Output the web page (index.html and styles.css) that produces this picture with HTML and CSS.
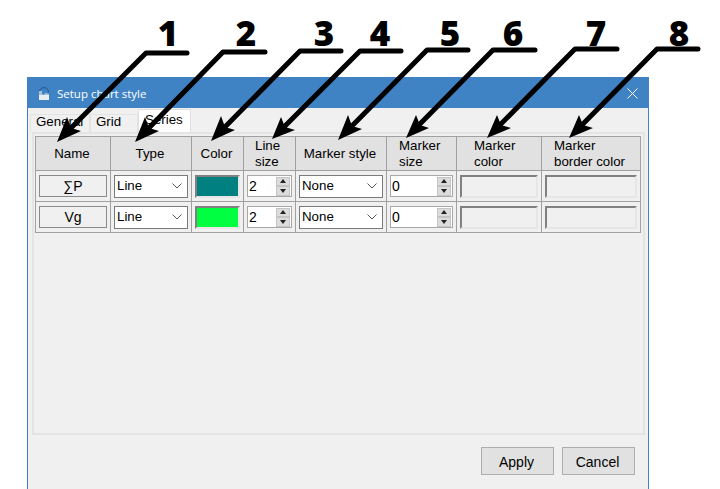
FILE: index.html
```html
<!DOCTYPE html>
<html>
<head>
<title>Setup chart style</title>
<link rel="stylesheet" href="styles.css">
</head>
<body>

<div class="window">
    <div class="titlebar">
        <svg class="app-icon" width="12" height="14" viewBox="0 0 12 14">
            <path d="M1.5 6C1 1 10 -0.5 10.5 6" fill="none" stroke="#1f4f80" stroke-width="1"/>
            <path d="M1 5h3v3l2 1 1-2 4 1v6H1z" fill="#e6edf3"/>
            <path d="M1 5h3v3l2 1 1-2 4 1v1H1z" fill="#2a6fb0" opacity=".35"/>
        </svg>
        <span class="title">Setup chart style</span>
        <svg class="close" width="11" height="11" viewBox="0 0 11 11">
            <path d="M.5.5l10 10M10.5.5l-10 10" stroke="#fff" stroke-width="1" fill="none"/>
        </svg>
    </div>

    <div class="tabs">
        <div class="tab tab-general">General</div>
        <div class="tab tab-grid">Grid</div>
        <div class="tab tab-series">Series</div>
    </div>

    <div class="panel">
        <table class="series-table">
            <tr class="head">
                <th class="w-name center">Name</th>
                <th class="w-type center">Type</th>
                <th class="w-color center">Color</th>
                <th class="w-line">Line<br>size</th>
                <th class="w-mstyle center">Marker style</th>
                <th class="w-msize">Marker<br>size</th>
                <th class="w-mcolor">Marker<br>color</th>
                <th class="w-mborder">Marker<br>border color</th>
            </tr>
            <tr>
                <td><div class="name-btn">∑P</div></td>
                <td><div class="select"><span>Line</span><svg class="chev" width="10" height="6" viewBox="0 0 10 6"><path d="M.5.5L5 5 9.5.5" fill="none" stroke="#555"/></svg></div></td>
                <td><div class="swatch teal"></div></td>
                <td>
                    <div class="spin"><span>2</span><div class="arrows"><div class="up"></div><div class="down"></div></div></div>
                </td>
                <td><div class="select"><span>None</span><svg class="chev" width="10" height="6" viewBox="0 0 10 6"><path d="M.5.5L5 5 9.5.5" fill="none" stroke="#555"/></svg></div></td>
                <td>
                    <div class="spin"><span>0</span><div class="arrows"><div class="up"></div><div class="down"></div></div></div>
                </td>
                <td><div class="swatch off"></div></td>
                <td><div class="swatch off"></div></td>
            </tr>
            <tr>
                <td><div class="name-btn">Vg</div></td>
                <td><div class="select"><span>Line</span><svg class="chev" width="10" height="6" viewBox="0 0 10 6"><path d="M.5.5L5 5 9.5.5" fill="none" stroke="#555"/></svg></div></td>
                <td><div class="swatch green"></div></td>
                <td>
                    <div class="spin"><span>2</span><div class="arrows"><div class="up"></div><div class="down"></div></div></div>
                </td>
                <td><div class="select"><span>None</span><svg class="chev" width="10" height="6" viewBox="0 0 10 6"><path d="M.5.5L5 5 9.5.5" fill="none" stroke="#555"/></svg></div></td>
                <td>
                    <div class="spin"><span>0</span><div class="arrows"><div class="up"></div><div class="down"></div></div></div>
                </td>
                <td><div class="swatch off"></div></td>
                <td><div class="swatch off"></div></td>
            </tr>
        </table>
    </div>

    <div class="footer">
        <button class="btn">Apply</button>
        <button class="btn">Cancel</button>
    </div>
</div>

<!-- callouts drawn over the screenshot -->
<svg class="callouts" width="720" height="489" viewBox="0 0 720 489">
    <g class="lines">
        <path d="M187 53H146L65 134"/>
        <path d="M265 52H223L143 134"/>
        <path d="M341 51H300L219 133"/>
        <path d="M401 51H360L280 131"/>
        <path d="M468 50H427L346 132"/>
        <path d="M535 50H493L414 130"/>
        <path d="M617 49H575L495 130"/>
        <path d="M698 49H657L577 130"/>
    </g>
    <g class="heads">
        <path d="M57 142L67 117L71 128L81 131z"/>
        <path d="M135 142L145 117L149 128L159 131z"/>
        <path d="M211 141L221 116L225 127L235 130z"/>
        <path d="M272 139L281 117L285 127L295 130z"/>
        <path d="M338 140L348 115L352 126L362 129z"/>
        <path d="M406 138L416 115L420 125L429 128z"/>
        <path d="M487 138L497 115L501 125L511 128z"/>
        <path d="M569 138L579 115L583 125L593 128z"/>
    </g>
</svg>
<span class="num n1">1</span>
<span class="num n2">2</span>
<span class="num n3">3</span>
<span class="num n4">4</span>
<span class="num n5">5</span>
<span class="num n6">6</span>
<span class="num n7">7</span>
<span class="num n8">8</span>

</body>
</html>
```

FILE: styles.css
```css
html, body {
    margin: 0;
    padding: 0;
    height: 489px;
    overflow: hidden;
    background-color: #fff;
}
body {
    position: relative;
    font-family: "Liberation Sans", Arial, sans-serif;
    font-size: 13.3px;
    color: #000;
}
.window {
    box-sizing: border-box;
    width: 622px;
    height: 412px;
    margin: 77px 0 0 27px;
    border: 1px solid #3f83c5;
    border-bottom: none;
    background-color: #f0f0f0;
}
.titlebar {
    display: flex;
    align-items: center;
    height: 30px;
    padding: 0 10px;
    background-color: #3f83c5;
    color: #fff;
    font-family: "Open Sans", sans-serif;
    font-size: 11.5px;
}
.app-icon {
    margin-right: 7px;
}
.title {
    flex: 1;
}
.tabs {
    display: flex;
    align-items: flex-end;
    height: 24px;
    padding-left: 2px;
}
.tab {
    box-sizing: border-box;
    height: 18px;
    line-height: 13px;
    border: 1px solid #e3e3e3;
    border-bottom: none;
}
.tab-general {
    width: 60px;
    padding-left: 5px;
}
.tab-grid {
    width: 48px;
    padding-left: 5px;
}
.tab-series {
    width: 53px;
    height: 23px;
    padding: 3px 0 0 6px;
    background-color: #fff;
    border-color: #e0e0e0;
}
.panel {
    box-sizing: border-box;
    width: 613px;
    height: 303px;
    margin-left: 4px;
    padding: 2px 0 0 1px;
    border: 2px solid #e4e4e4;
}
.series-table {
    width: 605px;
    border-collapse: collapse;
    table-layout: fixed;
}
.series-table th,
.series-table td {
    box-sizing: border-box;
    border: 1px solid #a0a0a0;
    padding: 0;
}
.series-table th {
    height: 33px;
    background-color: #e1e1e1;
    font-weight: normal;
    line-height: 16px;
    text-align: left;
    padding-top: 1px;
}
.series-table th.center {
    text-align: center;
    padding-right: 2px;
}
.series-table td {
    height: 31px;
    vertical-align: middle;
}
.w-name { width: 75px; }
.w-type { width: 81px; }
.w-color { width: 52px; }
.series-table .w-line { width: 52px; padding-left: 11px; }
.w-mstyle { width: 91px; }
.series-table .w-msize { width: 70px; padding-left: 12px; }
.series-table .w-mcolor { width: 85px; padding-left: 17px; }
.series-table .w-mborder { width: 99px; padding-left: 12px; }
.name-btn {
    box-sizing: border-box;
    height: 22px;
    margin: 0 3px;
    line-height: 20px;
    text-align: center;
    font-size: 14px;
    border: 1px solid #8a8a8a;
    background-color: #f0f0f0;
}
.select {
    box-sizing: border-box;
    display: flex;
    align-items: center;
    justify-content: space-between;
    height: 23px;
    margin: 0 3px;
    padding: 0 5px 1px 2px;
    background-color: #fff;
    border: 1px solid #7a7a7a;
}
.swatch {
    box-sizing: border-box;
    height: 23px;
    margin: 0 3px;
    border: 2px solid;
    border-color: #808080 #e6e6e6 #e6e6e6 #808080;
}
.teal { background-color: #008080; }
.green { background-color: #00ff40; }
.off { background-color: #f0f0f0; }
.spin {
    box-sizing: border-box;
    display: flex;
    align-items: center;
    justify-content: space-between;
    height: 22px;
    margin: 0 3px;
    padding: 0 1px 0 1px;
    background-color: #fff;
    border: 1px solid #a8a8a8;
    font-size: 14px;
}
.arrows {
    display: flex;
    flex-direction: column;
    width: 14px;
}
.arrows div {
    box-sizing: border-box;
    height: 9.5px;
    background-color: #dcdcdc;
    border: 1px solid #c4c4c4;
    display: flex;
    align-items: center;
    justify-content: center;
}
.arrows div::after {
    content: "";
    border-left: 3px solid transparent;
    border-right: 3px solid transparent;
}
.arrows .up::after {
    border-bottom: 4px solid #222;
}
.arrows .down::after {
    border-top: 4px solid #222;
}
.footer {
    display: flex;
    justify-content: flex-end;
    gap: 8px;
    padding: 12px 13px 0 0;
}
.btn {
    box-sizing: border-box;
    width: 73px;
    height: 28px;
    padding: 1px 2px 0 0;
    font-family: "Liberation Sans", Arial, sans-serif;
    font-size: 14px;
    color: #000;
    background-color: #e1e1e1;
    border: 1px solid #adadad;
}
.callouts {
    position: absolute;
    left: 0;
    top: 0;
}
.lines path {
    fill: none;
    stroke: #000;
    stroke-width: 5;
    stroke-linecap: round;
    stroke-linejoin: round;
}
.heads path {
    fill: #000;
}
.num {
    position: absolute;
    top: 10px;
    width: 30px;
    margin-left: -15px;
    text-align: center;
    font-family: "Open Sans", sans-serif;
    font-weight: 800;
    font-size: 35px;
    line-height: 45px;
    color: #000;
}
.n1 { left: 168px; }
.n2 { left: 246px; }
.n3 { left: 324px; }
.n4 { left: 380px; }
.n5 { left: 450px; }
.n6 { left: 513px; }
.n7 { left: 596px; }
.n8 { left: 679px; }
```
